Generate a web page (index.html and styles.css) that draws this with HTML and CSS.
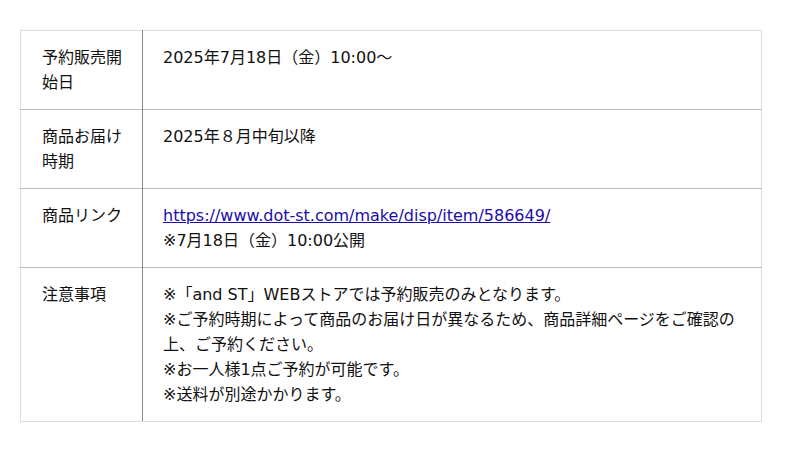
FILE: index.html
```html
<!DOCTYPE html>
<html lang="ja">
<head>
<meta charset="utf-8">
<link rel="stylesheet" href="styles.css">
</head>
<body>
<table class="info">
  <tr>
    <th>予約販売開始日</th>
    <td>2025年7月18日（金）10:00〜</td>
  </tr>
  <tr>
    <th>商品お届け時期</th>
    <td>2025年８月中旬以降</td>
  </tr>
  <tr>
    <th>商品リンク</th>
    <td><a href="#">https://www.dot-st.com/make/disp/item/586649/</a><br>※7月18日（金）10:00公開</td>
  </tr>
  <tr>
    <th>注意事項</th>
    <td>※「and ST」WEBストアでは予約販売のみとなります。<br>※ご予約時期によって商品のお届け日が異なるため、商品詳細ページをご確認の上、ご予約ください。<br>※お一人様1点ご予約が可能です。<br>※送料が別途かかります。</td>
  </tr>
</table>
</body>
</html>
```

FILE: styles.css
```css
html, body {
  margin: 0;
  background: #fff;
}
body {
  padding: 30px 20px;
  font-family: "DejaVu Sans", "Noto Sans CJK JP", sans-serif;
  font-size: 16px;
  line-height: 25px;
  color: #111;
}
.info {
  width: 742px;
  border-collapse: collapse;
  border: 1px solid #ddd;
}
.info th,
.info td {
  text-align: left;
  vertical-align: top;
  font-weight: normal;
  padding: 14px 20px;
  border-top: 1px solid #bbb;
}
.info tr:first-child th,
.info tr:first-child td {
  border-top: 1px solid #ddd;
}
.info tr:last-child th,
.info tr:last-child td {
  border-bottom: 1px solid #ddd;
}
.info th {
  width: 80px;
  padding-left: 21px;
  border-right: 1px solid #888;
}
.info a {
  color: #1a0dab;
  text-decoration: underline;
}
```
